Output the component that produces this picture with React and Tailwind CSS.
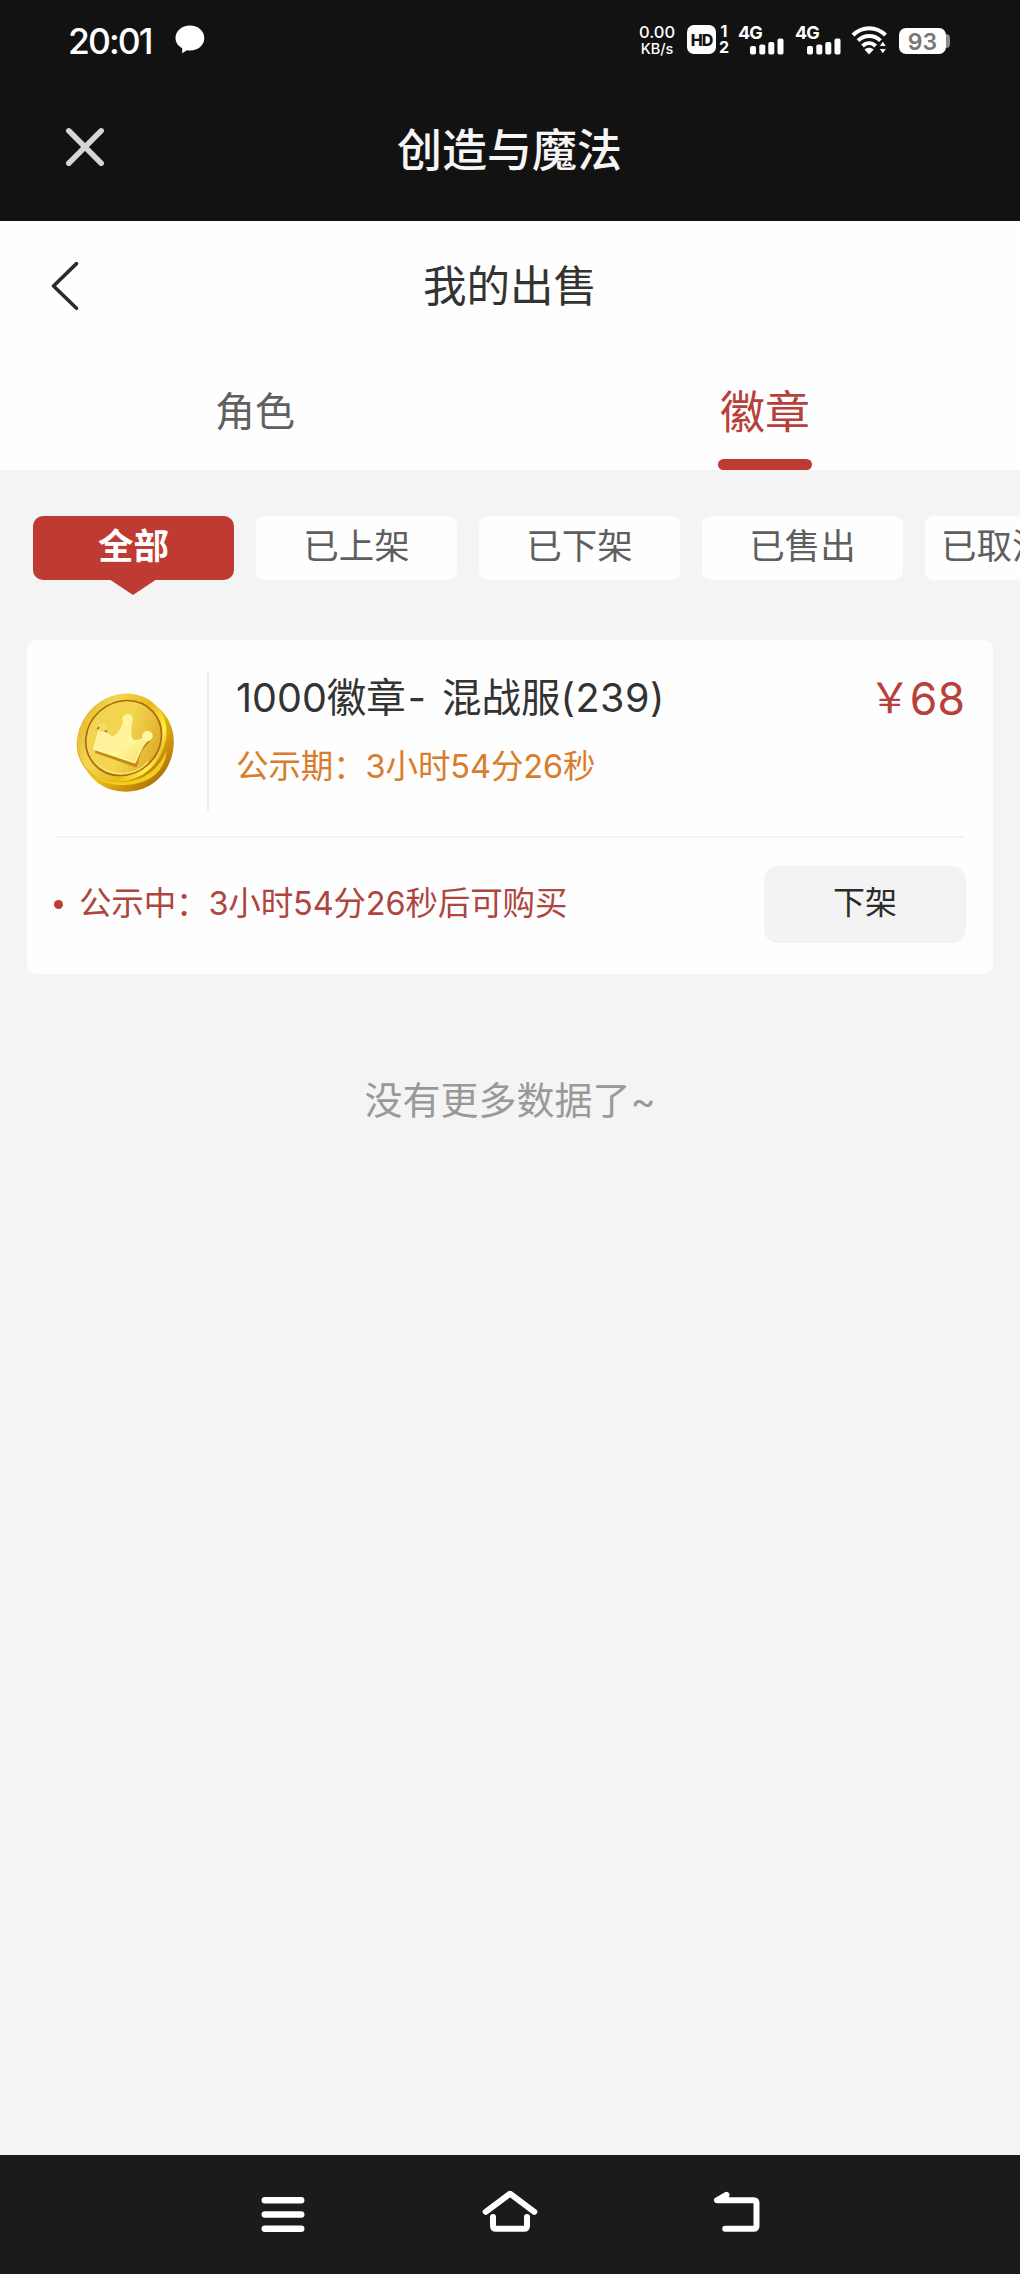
const filters = ['已上架', '已下架', '已售出'];

const SignalBars = () => (
  <svg className="absolute left-3 top-[13px]" width="34" height="17" viewBox="0 0 34 17" fill="#fff">
    <rect x="0" y="8" width="6" height="8.500" rx="1.800" />
    <rect x="9.300" y="6.500" width="6" height="10" rx="1.800" />
    <rect x="18.300" y="4" width="6" height="12.500" rx="1.800" />
    <rect x="27.500" y="0.500" width="6" height="16" rx="1.800" />
  </svg>
);

const Signal = () => (
  <div className="relative h-[30px] w-[46px]">
    <span className="block text-[18px] font-bold leading-[15px] tracking-[-1px]">4G</span>
    <SignalBars />
  </div>
);

const StatusBar = () => (
  <div className="flex h-20 items-start pl-[68px] pt-[25px] text-white">
    <span className="w-[107px] text-[35.500px] font-medium leading-[34px] tracking-[-1.900px]">20:01</span>
    <svg width="30" height="29" viewBox="0 0 30 29" fill="#fff">
      <path d="M15 0.500C6.800 0.500 0.500 6 0.500 13c0 4.300 2.600 8 6.700 10.300V28.200l4.800-3c1 .2 2 .3 3 .3 8.200 0 14.300-5.500 14.300-12.500S23.200.5 15 .5Z" />
    </svg>
    <div className="ml-[434px] flex w-[36px] flex-col items-center text-center">
      <span className="text-[16.500px] font-medium leading-[15px]">0.00</span>
      <span className="mt-[1px] text-[14.500px] font-medium leading-[15px]">KB/s</span>
    </div>
    <div className="ml-[12px] flex h-[29px] w-[29px] items-center justify-center rounded-[7px] bg-white text-[16px] font-extrabold tracking-[-1px] text-[#121212]">
      HD
    </div>
    <div className="ml-[2px] flex w-[12px] flex-col items-center text-[16px] font-bold leading-[13px]">
      <span>1</span>
      <span className="mt-[3px]">2</span>
    </div>
    <div className="ml-[8px]">
      <Signal />
    </div>
    <div className="ml-[11px]">
      <Signal />
    </div>
    <svg className="ml-[10px] mt-[1px]" width="37" height="29" viewBox="0 0 37 29" fill="none" stroke="#fff" strokeWidth="4">
      <path d="M2 9.200C11-.2 25.500-.2 34.500 9.200" />
      <path d="M7 14.600c6.500-6.300 16-6.300 22.500 0" />
      <path d="M11.500 20c4-3.800 9.200-3.800 13.200 0" />
      <path d="M13.500 23.400c2.800-2.300 6.400-2.300 9.200 0L18 28.400Z" fill="#fff" stroke="none" />
      <path d="M28 20.400l3.800-5.400 3.800 5.400ZM28 22.600h7.600L31.800 28Z" fill="#fff" stroke="#121212" strokeWidth="1" />
    </svg>
    <div className="ml-[11px] mt-[3px] flex items-center">
      <div className="flex h-[26px] w-[47px] items-center justify-center rounded-[7px] bg-white pt-[2px] text-[23px] font-semibold text-[#777]">
        93
      </div>
      <div className="h-[14px] w-[4px] rounded-r-[4px] bg-[#8a8a8a]" />
    </div>
  </div>
);

const Coin = () => (
  <svg width="130" height="130" viewBox="0 0 390 390">
    <defs>
      <linearGradient id="edge" x1="0" y1="0" x2="1" y2="1">
        <stop offset="0" stopColor="#d9a520" />
        <stop offset="0.55" stopColor="#e8bd12" />
        <stop offset="0.75" stopColor="#c88f08" />
        <stop offset="1" stopColor="#8e5208" />
      </linearGradient>
      <linearGradient id="rim" x1="0.2" y1="0" x2="0.7" y2="1">
        <stop offset="0" stopColor="#e3b52c" />
        <stop offset="0.3" stopColor="#f3d653" />
        <stop offset="0.65" stopColor="#e9b91d" />
        <stop offset="0.9" stopColor="#fff04a" />
        <stop offset="1" stopColor="#d79c0b" />
      </linearGradient>
      <linearGradient id="face" x1="0.2" y1="0" x2="0.8" y2="1">
        <stop offset="0" stopColor="#f1d253" />
        <stop offset="0.5" stopColor="#f4d64f" />
        <stop offset="1" stopColor="#dca724" />
      </linearGradient>
      <linearGradient id="crown" x1="0" y1="0" x2="1" y2="1">
        <stop offset="0" stopColor="#fff0a0" />
        <stop offset="0.6" stopColor="#fff59a" />
        <stop offset="1" stopColor="#f4dd55" />
      </linearGradient>
    </defs>
    <path d="M50 190C56 110 120 43 190 44c50 0 75 12 100 35 35 28 55 70 51 115-5 82-65 141-143 141-55 0-92-25-117-62-20-27-31-47-31-83Z" fill="url(#edge)" />
    <path d="M80 272c38 40 126 46 181 12 28-17 47-44 59-72-4 55-42 91-100 101-52 8-108-4-140-41Z" fill="#f2cd1c" />
    <ellipse cx="186" cy="173" rx="140" ry="126" transform="rotate(-42 186 173)" fill="url(#rim)" />
    <ellipse cx="191" cy="174" rx="118" ry="108" transform="rotate(-42 191 174)" fill="url(#face)" stroke="#a86a12" strokeWidth="5" />
    <path d="M108 247c42 47 117 45 157-3" fill="none" stroke="#f8e571" strokeWidth="4" />
    <path d="M106 214l121 43 13-45 35-40" fill="none" stroke="#c38a16" strokeWidth="9" strokeLinejoin="round" />
    <path d="M101 207l17-59 39 23c18-3 27-21 34-42h22c-3 30-2 50 9 53 15 2 25-3 35-13l6 12c-18 14-24 38-38 67Z" fill="url(#crown)" stroke="#fff6ad" strokeWidth="4" strokeLinejoin="round" />
    <circle cx="203" cy="118" r="16" fill="#fff4a0" />
    <circle cx="262" cy="168" r="16" fill="#fff4a0" />
    <circle cx="126" cy="143" r="13" fill="#f5da65" />
    <path d="M112 148l5-7M134 152l8 3" stroke="#9b7a20" strokeWidth="5" />
  </svg>
);

const AndroidNav = () => (
  <div className="flex h-[119px] bg-[#1b1b1b] pl-[256px] pt-[30px]">
    <svg width="55" height="60" viewBox="256 2185 55 60" stroke="#fff" strokeWidth="6.500" strokeLinecap="round">
      <path d="M264.800 2200.300h36.400M264.800 2214.500h36.400M264.800 2228.700h36.400" />
    </svg>
    <svg className="ml-[169px]" width="60" height="60" viewBox="480 2185 60 60" fill="none" stroke="#fff" strokeWidth="6" strokeLinecap="round" strokeLinejoin="round">
      <path d="M485.700 2211.800L510 2193.700l24.300 18.100" />
      <path d="M493 2217v8.700q0 3 3 3h28q3 0 3-3v-8.700" />
    </svg>
    <svg className="ml-[170px]" width="60" height="60" viewBox="710 2185 60 60" fill="none" stroke="#fff" strokeWidth="6" strokeLinecap="round" strokeLinejoin="round">
      <path d="M726.500 2194.800L717 2200.300H753.500q3 0 3 3v22.400q0 3-3 3H725.200" />
      <path d="M717 2200.300l9.500-5.500v5.500Z" fill="#fff" strokeWidth="5" />
    </svg>
  </div>
);

const App = () => {
  return (
    <div className="flex h-[2274px] w-[1020px] flex-col overflow-hidden bg-[#f4f4f4] font-['Inter','Noto_Sans_CJK_SC',sans-serif]">
      {/* Host app header */}
      <header className="h-[221px] bg-[#121212]">
        <StatusBar />
        <div className="flex h-[141px] pl-[64px]">
          <svg className="mt-[46px]" width="42" height="42" viewBox="0 0 42 42" stroke="#d6d6da" strokeWidth="5.500" strokeLinecap="round">
            <path d="M4.800 4.800l32.400 32.400M37.200 4.800L4.800 37.200" />
          </svg>
          <h1 className="ml-[291px] mt-[41px] text-[45px] font-medium leading-[60px] text-[#f5f5f5]">创造与魔法</h1>
        </div>
      </header>

      {/* Page title and tabs */}
      <div className="h-[249px] bg-[#fefefe]">
        <div className="flex h-[130px] items-center pl-[50px]">
          <svg width="30" height="50" viewBox="0 0 30 50" fill="none" stroke="#2b2b2b" strokeWidth="3.600" strokeLinecap="round" strokeLinejoin="round">
            <path d="M26.500 2.600L3.500 25l23 22.300" />
          </svg>
          <h2 className="ml-[343px] text-[43.500px] leading-[60px] text-[#333]">我的出售</h2>
        </div>
        <div className="grid h-[119px] grid-cols-2 text-center">
          <div className="pt-[31px] text-[40px] leading-[60px] text-[#606060]">角色</div>
          <div className="flex flex-col items-center justify-between pt-[32px] text-[#b8403b]">
            <span className="text-[45px] leading-[60px]">徽章</span>
            <div className="h-[11px] w-[94px] rounded-full bg-[#c03a34]" />
          </div>
        </div>
      </div>

      {/* Status filters */}
      <div className="flex gap-[22px] overflow-hidden pb-[60px] pl-[33px] pt-[46px] text-[35.500px] leading-[62px] text-[#5f5f5f]">
        <div className="relative h-16 w-[201px] shrink-0 rounded-[10px] bg-[#c03a34] text-center font-bold text-white">
          全部
          <svg className="absolute left-[76px] top-[63px]" width="48" height="17" viewBox="0 0 48 17" fill="#c03a34">
            <path d="M0 0h48L24 16Z" />
          </svg>
        </div>
        {filters.map((f) => (
          <div key={f} className="h-16 w-[201px] shrink-0 rounded-[9px] bg-[#fefefe] text-center">
            {f}
          </div>
        ))}
        <div className="h-16 w-[201px] shrink-0 rounded-[9px] bg-[#fefefe] pl-[16px]">已取消</div>
      </div>

      {/* Listing */}
      <div className="mx-[27px] h-[334px] rounded-[9px] bg-[#fefefe] px-[28px]">
        <div className="flex h-[198px] border-b-2 border-[#f4f4f4] pt-[32px]">
          <div className="-mb-2 ml-[5px] mt-[8px] h-[130px] w-[130px]">
            <Coin />
          </div>
          <div className="ml-[17px] h-[140px] w-[2px] bg-[#f0f0f0]" />
          <div className="ml-[27px]">
            <div className="h-[52px] whitespace-pre text-[39.500px] leading-[53px] text-[#333]">
              1000徽章<span className="ml-[2px] mr-[5px]">-</span> 混战服<span className="tracking-[0.5px]">(239)</span>
            </div>
            <div className="mt-[17px] text-[32.500px] leading-[52px] tracking-[-0.1px] text-[#d97c2b]">公示期：3小时54分26秒</div>
          </div>
          <div className="ml-auto flex leading-[54px] text-[#b8403b]">
            <span className="-mt-[1px] text-[42px] tracking-[-1px]">￥</span>
            <span className="text-[44.500px]">68</span>
          </div>
        </div>
        <div className="flex items-start">
          <div className="-ml-[1px] mt-[62px] h-[9px] w-[9px] rounded-full bg-[#c03a34]" />
          <div className="ml-[16px] mt-[40px] text-[32.500px] leading-[52px] tracking-[-0.15px] text-[#ae4540]">公示中：3小时54分26秒后可购买</div>
          <button className="-mr-[1px] ml-auto mt-[28px] h-[77px] w-[202px] rounded-[14px] bg-[#f3f3f3] pb-[3px] text-[32px] text-[#2c2c2c]">
            下架
          </button>
        </div>
      </div>

      <div className="mt-[100px] text-center text-[38px] leading-[52px] text-[#999]">没有更多数据了~</div>

      <div className="mt-auto">
        <AndroidNav />
      </div>
    </div>
  );
};

export default App;
